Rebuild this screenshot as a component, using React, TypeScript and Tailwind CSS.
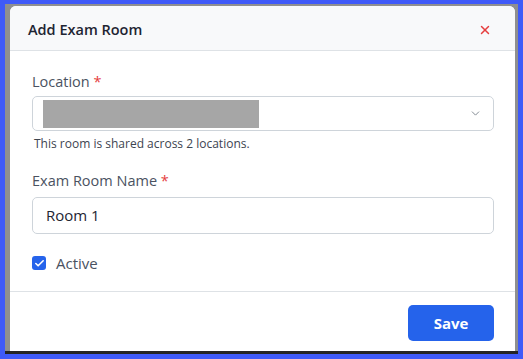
import { ChevronDown, X, Check } from "lucide-react";

const font = { fontFamily: '"Open Sans", "Noto Sans", sans-serif' };

const App = () => {
  return (
    <div className="w-[523px] h-[359px] bg-[#3f5af8] pl-[5px] pt-[4px] pr-[5px] pb-[5px] overflow-hidden" style={font}>
      <div className="h-full bg-[#8f8f8f] border-b-[3px] border-[#242424] pl-[5px] pr-[3px] pt-[2px] flex flex-col">
        <div className="flex-1 bg-white rounded-t-[6px] flex flex-col overflow-hidden">
          {/* Header */}
          <div className="h-[45px] bg-[#f8f9fa] border-b border-[#dee2e6] flex items-center justify-between pl-[18px] pr-[23px] pt-[3px]">
            <h2 className="text-[14.5px] font-semibold text-[#1e2532]">Add Exam Room</h2>
            <X className="w-[14px] h-[14px] text-[#e53e3e]" strokeWidth={2.5} />
          </div>

          {/* Body */}
          <div className="flex-1 pl-[22px] pr-[21px] pt-[21px]">
            <label className="block text-[14.5px] text-[#4a5261] leading-[20px]">
              Location <span className="text-[#e53e3e]">*</span>
            </label>
            <div className="mt-[4px] h-[35px] border border-[#ced4da] rounded-[5px] flex items-center pl-[10px] pr-[11px]">
              <div className="w-[216px] h-[28px] bg-[#a6a6a6]" />
              <ChevronDown className="ml-auto w-[13px] h-[13px] text-[#7d858f]" strokeWidth={1.75} />
            </div>
            <p className="mt-[5px] pl-[2px] text-[12px] text-[#3d4450] leading-[15px]">
              This room is shared across 2 locations.
            </p>

            <label className="block mt-[20px] text-[14.5px] text-[#4a5261] leading-[20px]">
              Exam Room Name <span className="text-[#e53e3e]">*</span>
            </label>
            <div className="mt-[6px] h-[37px] border border-[#ced4da] rounded-[5px] flex items-center pl-[13px] text-[15px] text-[#1e2532]">
              Room 1
            </div>

            <div className="mt-[18px] flex items-center gap-[10px]">
              <span className="w-[14px] h-[14px] rounded-[3px] bg-[#2563eb] flex items-center justify-center">
                <Check className="w-[11px] h-[11px] text-white" strokeWidth={3.5} />
              </span>
              <span className="text-[15px] text-[#4a5261]">Active</span>
            </div>
          </div>

          {/* Footer */}
          <div className="h-[60px] border-t border-[#dee2e6] flex items-start justify-end pt-[13px] pr-[21px]">
            <button className="w-[86px] h-[36px] bg-[#2563eb] rounded-[5px] text-white text-[15px] font-bold">
              Save
            </button>
          </div>
        </div>
      </div>
    </div>
  );
};

export default App;
